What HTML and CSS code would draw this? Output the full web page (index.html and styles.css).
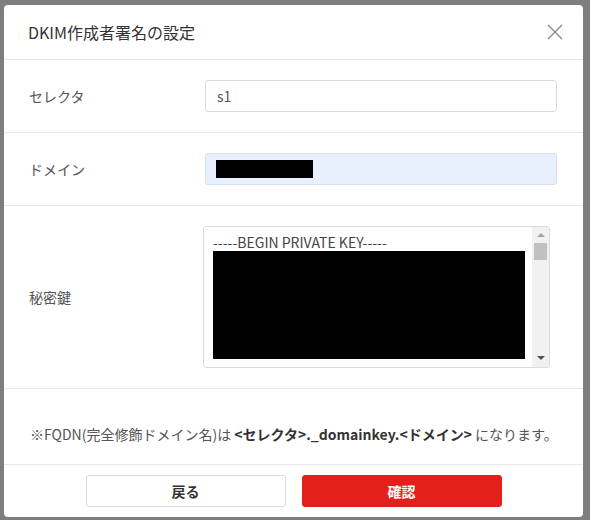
FILE: index.html
```html
<!DOCTYPE html>
<html lang="ja">
<head>
  <meta charset="UTF-8" />
  <title>DKIM作成者署名の設定</title>
  <link rel="stylesheet" href="styles.css">
</head>
<body>
  <div class="overlay">
    <div class="modal">
      <div class="modal-header">
        <h2 class="modal-title">DKIM作成者署名の設定</h2>
        <button class="modal-close" aria-label="閉じる">
          <svg width="16" height="16" viewBox="0 0 16 16">
            <path d="M1 1 L15 15 M15 1 L1 15" stroke="#8a8a8a" stroke-width="1.4" fill="none" />
          </svg>
        </button>
      </div>

      <div class="form-row">
        <label class="form-label">セレクタ</label>
        <div class="form-field">
          <div class="text-input">s1</div>
        </div>
      </div>

      <div class="form-row">
        <label class="form-label">ドメイン</label>
        <div class="form-field">
          <div class="text-input is-autofill"><span class="redacted domain-mask"></span></div>
        </div>
      </div>

      <div class="form-row">
        <label class="form-label">秘密鍵</label>
        <div class="form-field">
          <div class="key-box">
            <div class="key-text">
              <div>-----BEGIN PRIVATE KEY-----</div>
              <div class="redacted key-mask"></div>
            </div>
            <div class="scrollbar">
              <span class="scroll-up"></span>
              <span class="scroll-thumb"></span>
              <span class="scroll-down"></span>
            </div>
          </div>
        </div>
      </div>

      <div class="note-row">
        <p class="note">※FQDN(完全修飾ドメイン名)は <strong>&lt;セレクタ&gt;._domainkey.&lt;ドメイン&gt;</strong> になります。</p>
      </div>

      <div class="modal-footer">
        <button class="btn btn-back">戻る</button>
        <button class="btn btn-confirm">確認</button>
      </div>
    </div>
  </div>
</body>
</html>
```

FILE: styles.css
```css
* {
  box-sizing: border-box;
}

html, body {
  margin: 0;
  padding: 0;
  height: 520px;
  overflow: hidden;
}

body {
  background: #fff;
  font-family: "Noto Sans CJK JP", "Noto Sans", sans-serif;
  color: #333;
}

.overlay {
  width: 590px;
  height: 520px;
  background: #7e7e7e;
  padding: 5px 0 0 4px;
}

.modal {
  width: 579px;
  height: 512px;
  background: #fff;
  border-radius: 4px;
  display: flex;
  flex-direction: column;
}

.modal-header {
  height: 55px;
  display: flex;
  align-items: center;
  justify-content: space-between;
  padding: 0 20px 0 24px;
  border-bottom: 1px solid #e6e6e6;
}

.modal-title {
  margin: 0;
  font-size: 16px;
  font-weight: 400;
  color: #333;
}

.modal-close {
  width: 16px;
  height: 16px;
  padding: 0;
  border: 0;
  background: none;
  display: flex;
}

.form-row {
  display: flex;
  align-items: center;
  padding: 20px 26px 20px 25px;
  border-bottom: 1px solid #e8e8e8;
}

.form-label {
  width: 176px;
  font-size: 14px;
  color: #555;
}

.form-field {
  flex: 1;
}

.text-input {
  height: 32px;
  border: 1px solid #dcdcdc;
  border-radius: 3px;
  padding: 0 11px;
  display: flex;
  align-items: center;
  font-size: 14px;
  color: #555;
}

.text-input.is-autofill {
  background: #e8f0fe;
  border-color: #d8e0ea;
  padding-left: 10px;
}

.redacted {
  background: #000;
  display: block;
}

.domain-mask {
  width: 97px;
  height: 18px;
}

.key-box {
  width: 347px;
  height: 142px;
  margin-left: -2px;
  border: 1px solid #dcdcdc;
  border-radius: 3px;
  display: flex;
  overflow: hidden;
}

.key-text {
  flex: 1;
  padding: 7px 7px 0 9px;
  font-size: 14px;
  line-height: 17px;
  color: #444;
  overflow: hidden;
}

.key-mask {
  height: 108px;
}

.scrollbar {
  width: 17px;
  background: #f1f1f1;
  display: flex;
  flex-direction: column;
  align-items: center;
  padding-top: 6px;
}

.scroll-up {
  width: 0;
  height: 0;
  border-left: 4px solid transparent;
  border-right: 4px solid transparent;
  border-bottom: 4px solid #a3a3a3;
}

.scroll-thumb {
  width: 13px;
  height: 17px;
  margin-top: 6px;
  background: #c1c1c1;
}

.scroll-down {
  width: 0;
  height: 0;
  margin-top: auto;
  margin-bottom: 7px;
  border-left: 4px solid transparent;
  border-right: 4px solid transparent;
  border-top: 4px solid #505050;
}

.note-row {
  padding: 35px 25px 20px 26px;
  border-bottom: 1px solid #e8e8e8;
}

.note {
  margin: 0;
  font-size: 14px;
  line-height: 20px;
  color: #555;
  white-space: nowrap;
}

.note strong {
  color: #333;
  font-weight: 700;
}

.modal-footer {
  flex: 1;
  display: flex;
  justify-content: center;
  align-items: center;
  gap: 16px;
}

.btn {
  width: 200px;
  height: 32px;
  border-radius: 3px;
  font-family: inherit;
  font-size: 14px;
  font-weight: 700;
  cursor: pointer;
}

.btn-back {
  background: #fff;
  border: 1px solid #dcdcdc;
  color: #333;
}

.btn-confirm {
  background: #e2211c;
  border: 1px solid #e2211c;
  color: #fff;
}
```
